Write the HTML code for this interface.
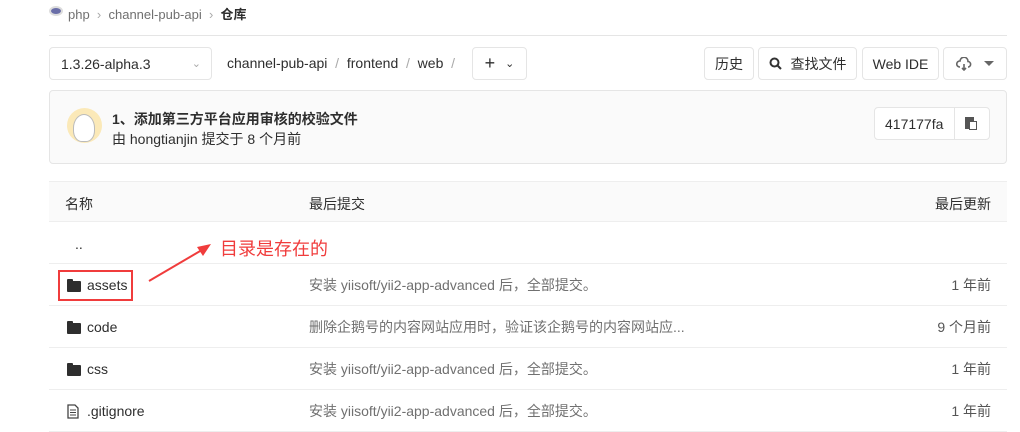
<!DOCTYPE html>
<html><head><meta charset="utf-8"><style>
*{box-sizing:border-box;margin:0;padding:0}
body{width:1020px;height:432px;overflow:hidden;background:#fff;font-family:"Liberation Sans","Noto Sans CJK SC",sans-serif;font-size:14px;color:#2e2e2e;position:relative}
.a{position:absolute}
.btn{position:absolute;top:47px;height:33px;border:1px solid #e5e5e5;border-radius:4px;background:#fff;display:flex;align-items:center;justify-content:center;font-size:14px;color:#2e2e2e}
.row{position:absolute;left:49px;width:958px;height:42px;border-bottom:1px solid #eee}
.row span{position:absolute;top:0;line-height:42px;height:42px}
.nm{left:38px;color:#2e2e2e}
.msg{left:260px;color:#707070}
.tm{right:16px;color:#555}
.fold{position:absolute;left:18px;top:17px;width:14px;height:11px;background:#2e2e2e;border-radius:1px}
.fold:before{content:"";position:absolute;left:0;top:-2px;width:6px;height:3px;background:#2e2e2e;border-radius:1px 1px 0 0}
</style></head><body>
<div class="a" style="left:49px;top:6px;width:14px;height:10px;border-radius:50%;background:#6a6ea8;border:2px solid #ddd"></div>
<div class="a" style="left:68px;top:4px;font-size:13px;color:#707070">php&nbsp;&nbsp;<span style="color:#aaa">›</span>&nbsp;&nbsp;channel-pub-api&nbsp;&nbsp;<span style="color:#aaa">›</span>&nbsp;&nbsp;<b style="color:#2e2e2e">仓库</b></div>
<div class="a" style="left:49px;top:35px;width:958px;height:1px;background:#e5e5e5"></div>
<div class="btn" style="left:49px;width:163px;justify-content:flex-start;padding-left:11px">1.3.26-alpha.3<span style="position:absolute;right:10px;color:#aaa;font-size:11px">⌄</span></div>
<div class="a" style="left:227px;top:55px;font-size:14px">channel-pub-api <span style="color:#aaa">&nbsp;/&nbsp;</span> frontend <span style="color:#aaa">&nbsp;/&nbsp;</span> web <span style="color:#aaa">&nbsp;/</span></div>
<div class="btn" style="left:472px;width:55px;font-size:18px">+<span style="font-size:11px;margin-left:10px">⌄</span></div>
<div class="btn" style="left:704px;width:50px">历史</div>
<div class="btn" style="left:758px;width:99px"><svg width="13" height="13" viewBox="0 0 13 13" style="margin-right:9px"><circle cx="5.5" cy="5.5" r="4" fill="none" stroke="#333" stroke-width="2"/><path d="M8.5 8.5L12 12" stroke="#333" stroke-width="2"/></svg>查找文件</div>
<div class="btn" style="left:862px;width:77px">Web IDE</div>
<div class="btn" style="left:943px;width:64px"><svg width="16" height="14" viewBox="0 0 16 14"><path d="M4 10H3.5A3 3 0 0 1 4 4 4 4 0 0 1 12 4.5 2.8 2.8 0 0 1 12.5 10H12" fill="none" stroke="#666" stroke-width="1.6"/><path d="M8 7v6M6 11l2 2 2-2" fill="none" stroke="#666" stroke-width="1.6"/></svg><span style="margin-left:12px;border-top:5px solid #666;border-left:5px solid transparent;border-right:5px solid transparent"></span></div>
<div class="a" style="left:49px;top:90px;width:958px;height:74px;background:#fafafa;border:1px solid #e5e5e5;border-radius:4px"></div>
<div class="a" style="left:67px;top:108px;width:35px;height:35px;border-radius:50%;background:#fbe9b8"></div>
<div class="a" style="left:73px;top:114px;width:22px;height:28px;border-radius:50% 50% 40% 40%;background:#fff;border:1px solid #bbb"></div>
<div class="a" style="left:112px;top:109px;font-weight:bold;font-size:14px">1、添加第三方平台应用审核的校验文件</div>
<div class="a" style="left:112px;top:129px;font-size:14px">由 hongtianjin 提交于 8 个月前</div>
<div class="a" style="left:874px;top:107px;width:116px;height:33px;border:1px solid #e5e5e5;border-radius:4px;background:#fff"></div>
<div class="a" style="left:954px;top:108px;width:1px;height:31px;background:#e5e5e5"></div>
<div class="a" style="left:885px;top:116px">417177fa</div>
<div class="a" style="left:965px;top:117px;width:9px;height:12px;background:#555"></div><div class="a" style="left:969px;top:121px;width:8px;height:9px;background:#fff;border:1px solid #555"></div>
<div class="a" style="left:49px;top:181px;width:958px;height:41px;background:#fafafa;border-top:1px solid #eee;border-bottom:1px solid #eee"></div>
<div class="a" style="left:65px;top:194px">名称</div>
<div class="a" style="left:309px;top:194px">最后提交</div>
<div class="a" style="left:935px;top:194px">最后更新</div>
<div class="row" style="top:222px"><span style="left:26px;line-height:44px">..</span></div>
<div class="row" style="top:264px"><div class="fold"></div><span class="nm">assets</span><span class="msg">安装 yiisoft/yii2-app-advanced 后，全部提交。</span><span class="tm">1 年前</span></div>
<div class="row" style="top:306px"><div class="fold"></div><span class="nm">code</span><span class="msg">删除企鹅号的内容网站应用时，验证该企鹅号的内容网站应...</span><span class="tm">9 个月前</span></div>
<div class="row" style="top:348px"><div class="fold"></div><span class="nm">css</span><span class="msg">安装 yiisoft/yii2-app-advanced 后，全部提交。</span><span class="tm">1 年前</span></div>
<div class="row" style="top:390px"><svg class="a" style="left:18px;top:14px" width="12" height="15" viewBox="0 0 12 15"><path d="M1 1h7l3 3v10H1z" fill="none" stroke="#444" stroke-width="1.3"/><path d="M3 6h6M3 8.5h6M3 11h6" stroke="#444"/></svg><span class="nm">.gitignore</span><span class="msg">安装 yiisoft/yii2-app-advanced 后，全部提交。</span><span class="tm">1 年前</span></div>
<div class="a" style="left:58px;top:270px;width:75px;height:31px;border:2px solid #f03c3c"></div>
<svg class="a" style="left:145px;top:235px" width="70" height="50"><path d="M4 46L62 12" stroke="#f03c3c" stroke-width="2"/><path d="M66 9L52 12 58 21z" fill="#f03c3c"/></svg>
<div class="a" style="left:220px;top:235px;color:#f03c3c;font-size:18px">目录是存在的</div>
</body></html>
